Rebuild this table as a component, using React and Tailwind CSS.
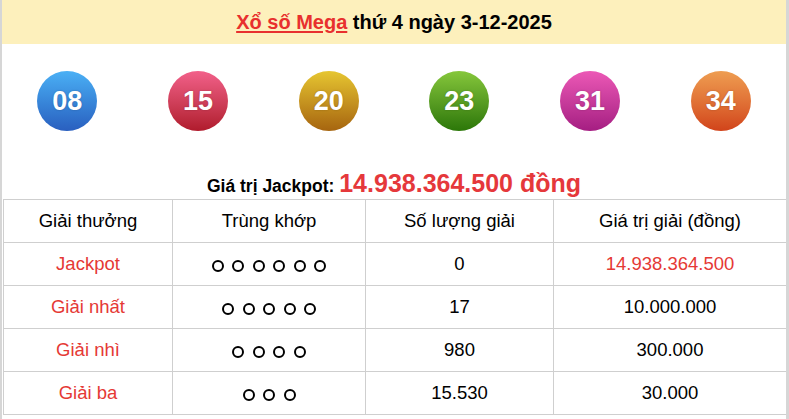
import React from "react";

const balls = [
  { n: "08", g: "bg-gradient-to-b from-[#4bb0f5] to-[#2a5fbf]" },
  { n: "15", g: "bg-gradient-to-b from-[#f2608a] to-[#b01a2c]" },
  { n: "20", g: "bg-gradient-to-b from-[#e6c631] to-[#a6650f]" },
  { n: "23", g: "bg-gradient-to-b from-[#86c73b] to-[#2b7708]" },
  { n: "31", g: "bg-gradient-to-b from-[#ec58b6] to-[#a51d82]" },
  { n: "34", g: "bg-gradient-to-b from-[#ee9d51] to-[#d1431a]" },
];

const rows = [
  { name: "Jackpot", c: 6, q: "0", v: "14.938.364.500", red: true },
  { name: "Giải nhất", c: 5, q: "17", v: "10.000.000" },
  { name: "Giải nhì", c: 4, q: "980", v: "300.000" },
  { name: "Giải ba", c: 3, q: "15.530", v: "30.000" },
];

function Circles({ count }) {
  return (
    <div className="flex items-center justify-center gap-[8.5px] pt-[3px]">
      {Array.from({ length: count }).map((_, i) => (
        <span
          key={i}
          className="inline-block w-[12px] h-[12px] rounded-full border-2 border-black"
        />
      ))}
    </div>
  );
}

export default function App() {
  return (
    <div className="w-[789px] h-[419px] overflow-hidden bg-white border-l-2 border-r-[3px] border-[#d6d6d6] font-['Liberation_Sans',Arial,sans-serif] text-black">
      <div className="h-[44px] bg-[#fdf0bc] flex items-center justify-center text-[20px] font-bold">
        <span className="text-[#e8302e] underline underline-offset-2 decoration-2">Xổ số Mega</span>
        <span>&nbsp;thứ 4 ngày 3-12-2025</span>
      </div>
      <div className="grid grid-cols-6 pt-[27px]">
        {balls.map((b) => (
          <div key={b.n} className="flex justify-center">
            <div
              className={`w-[60px] h-[60px] rounded-full ${b.g} flex items-center justify-center text-white font-bold text-[27px] leading-none [text-shadow:0_0_2px_rgba(0,0,0,0.25)]`}
            >
              {b.n}
            </div>
          </div>
        ))}
      </div>
      <div className="mt-[34px] h-[30px] flex items-baseline justify-center">
        <span className="text-[17.5px] font-bold">Giá trị Jackpot:&nbsp;</span>
        <span className="text-[25px] font-bold text-[#e5383b]">14.938.364.500 đồng</span>
      </div>
      <table className="mt-[4px] ml-[1px] w-[783px] table-fixed border-collapse text-[18.5px]">
        <colgroup>
          <col className="w-[169px]" />
          <col className="w-[193px]" />
          <col className="w-[188px]" />
          <col className="w-[233px]" />
        </colgroup>
        <thead>
          <tr className="h-[43px]">
            <th className="border border-[#cfcfcf] font-normal">Giải thưởng</th>
            <th className="border border-[#cfcfcf] font-normal">Trùng khớp</th>
            <th className="border border-[#cfcfcf] font-normal">Số lượng giải</th>
            <th className="border border-[#cfcfcf] font-normal">Giá trị giải (đồng)</th>
          </tr>
        </thead>
        <tbody>
          {rows.map((r) => (
            <tr key={r.name} className="h-[43px]">
              <td className="border border-[#cfcfcf] text-center text-[#e53935]">{r.name}</td>
              <td className="border border-[#cfcfcf]">
                <Circles count={r.c} />
              </td>
              <td className="border border-[#cfcfcf] text-center">{r.q}</td>
              <td className={`border border-[#cfcfcf] text-center ${r.red ? "text-[#e53935]" : ""}`}>{r.v}</td>
            </tr>
          ))}
        </tbody>
      </table>
    </div>
  );
}
